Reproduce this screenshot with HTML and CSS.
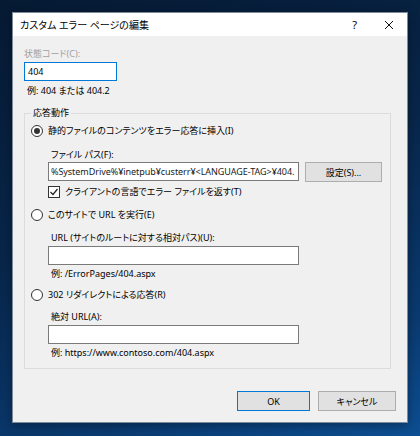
FILE: index.html
```html
<!DOCTYPE html>
<html lang="ja">
<head>
    <meta charset="UTF-8">
    <title>カスタム エラー ページの編集</title>
    <link rel="stylesheet" href="styles.css">
</head>
<body>
    <div class="dialog">
        <div class="titlebar">
            <span class="title">カスタム エラー ページの編集</span>
            <span class="help">?</span>
            <svg class="close" width="10" height="10" viewBox="0 0 10 10">
                <path d="M1 1 L9 9 M9 1 L1 9" stroke="#111" stroke-width="1" fill="none"/>
            </svg>
        </div>
        <div class="content">
            <div class="label disabled">状態コード(C):</div>
            <div class="textbox focused code">404</div>
            <div class="hint">例: 404 または 404.2</div>

            <fieldset class="group">
                <legend>応答動作</legend>

                <div class="option">
                    <span class="radio checked"></span>
                    <span>静的ファイルのコンテンツをエラー応答に挿入(I)</span>
                </div>
                <div class="sub">
                    <div class="label first">ファイル パス(F):</div>
                    <div class="path-row">
                        <div class="textbox path">%SystemDrive%¥inetpub¥custerr¥&lt;LANGUAGE-TAG&gt;¥404.</div>
                        <div class="button settings">設定(S)...</div>
                    </div>
                    <div class="option check-row">
                        <span class="checkbox">
                            <svg width="10" height="10" viewBox="0 0 10 10">
                                <path d="M1.5 5 L4 7.5 L8.5 2" stroke="#222" stroke-width="1.2" fill="none"/>
                            </svg>
                        </span>
                        <span>クライアントの言語でエラー ファイルを返す(T)</span>
                    </div>
                </div>

                <div class="option second">
                    <span class="radio"></span>
                    <span>このサイトで URL を実行(E)</span>
                </div>
                <div class="sub">
                    <div class="label">URL (サイトのルートに対する相対パス)(U):</div>
                    <div class="textbox wide"></div>
                    <div class="hint">例: /ErrorPages/404.aspx</div>
                </div>

                <div class="option third">
                    <span class="radio"></span>
                    <span>302 リダイレクトによる応答(R)</span>
                </div>
                <div class="sub">
                    <div class="label last">絶対 URL(A):</div>
                    <div class="textbox wide"></div>
                    <div class="hint">例: https://www.contoso.com/404.aspx</div>
                </div>
            </fieldset>

            <div class="actions">
                <div class="button default">OK</div>
                <div class="button cancel">キャンセル</div>
            </div>
        </div>
    </div>
</body>
</html>
```

FILE: styles.css
```css
* {
    margin: 0;
    padding: 0;
    box-sizing: border-box;
}
body {
    width: 420px;
    height: 436px;
    overflow: hidden;
    padding: 12px 0 0 12px;
    background: linear-gradient(160deg, #061a33 0%, #08264a 45%, #0a3a70 80%, #0d4f93 100%);
    font-family: "Noto Sans", "Noto Sans CJK JP", sans-serif;
    font-size: 9px;
    font-feature-settings: "palt";
    color: #000;
}
.dialog {
    width: 396px;
    height: 411px;
    border: 1px solid #7d8a99;
    background: #f0f0f0;
    box-shadow: 0 2px 10px rgba(0, 0, 0, 0.35);
}
.titlebar {
    height: 23px;
    background: #fff;
    display: flex;
    align-items: center;
    padding-left: 7px;
    font-size: 10px;
}
.title {
    flex: 1;
    line-height: 14px;
}
.help {
    font-size: 11px;
    margin-right: 27px;
}
.close {
    margin-right: 13px;
}
.content {
    padding: 11px 0 0 11px;
}
.label,
.hint,
.option {
    line-height: 14px;
}
.disabled {
    color: #a0a0a0;
}
.textbox {
    height: 19px;
    border: 1px solid #7a7a7a;
    background: #fff;
    line-height: 17px;
    padding-left: 3px;
    white-space: nowrap;
    overflow: hidden;
}
.focused {
    border-color: #0078d7;
}
.code {
    width: 93px;
    margin-top: 1px;
}
.content > .hint {
    margin: 3px 0 0 3px;
}
.group {
    width: 367px;
    margin-top: 8px;
    border: 1px solid #dcdcdc;
    padding: 4px 0 8px 6px;
}
.group legend {
    padding: 0 2px;
    line-height: 14px;
}
.option {
    display: flex;
    align-items: center;
    gap: 5px;
}
.radio {
    width: 12px;
    height: 12px;
    border: 1px solid #333;
    border-radius: 50%;
    background: #fff;
    display: flex;
    align-items: center;
    justify-content: center;
}
.radio.checked::after {
    content: "";
    width: 6px;
    height: 6px;
    border-radius: 50%;
    background: #333;
}
.second {
    margin-top: 9px;
}
.third {
    margin-top: 7px;
}
.sub {
    padding-left: 17px;
}
.sub .label {
    padding-left: 3px;
    margin-top: 9px;
}
.sub .label.first {
    margin-top: 10px;
}
.sub .label.last {
    margin-top: 8px;
}
.sub .label + .textbox {
    margin-top: 1px;
}
.sub .hint {
    margin: 2px 0 0 3px;
}
.wide {
    width: 251px;
}
.path-row {
    display: flex;
    gap: 6px;
}
.path {
    width: 251px;
    padding-left: 2px;
    letter-spacing: -0.05px;
    color: #1a1a1a;
}
.button {
    height: 20px;
    border: 1px solid #adadad;
    background: #e1e1e1;
    display: flex;
    align-items: center;
    justify-content: center;
}
.settings {
    width: 77px;
}
.check-row {
    margin-top: 3px;
    gap: 5px;
}
.checkbox {
    width: 12px;
    height: 12px;
    border: 1px solid #333;
    background: #fff;
    display: flex;
    align-items: center;
    justify-content: center;
}
.actions {
    display: flex;
    justify-content: flex-end;
    gap: 8px;
    margin-top: 22px;
    padding-right: 11px;
}
.default {
    width: 73px;
    border-color: #0078d7;
}
.cancel {
    width: 78px;
}
```
